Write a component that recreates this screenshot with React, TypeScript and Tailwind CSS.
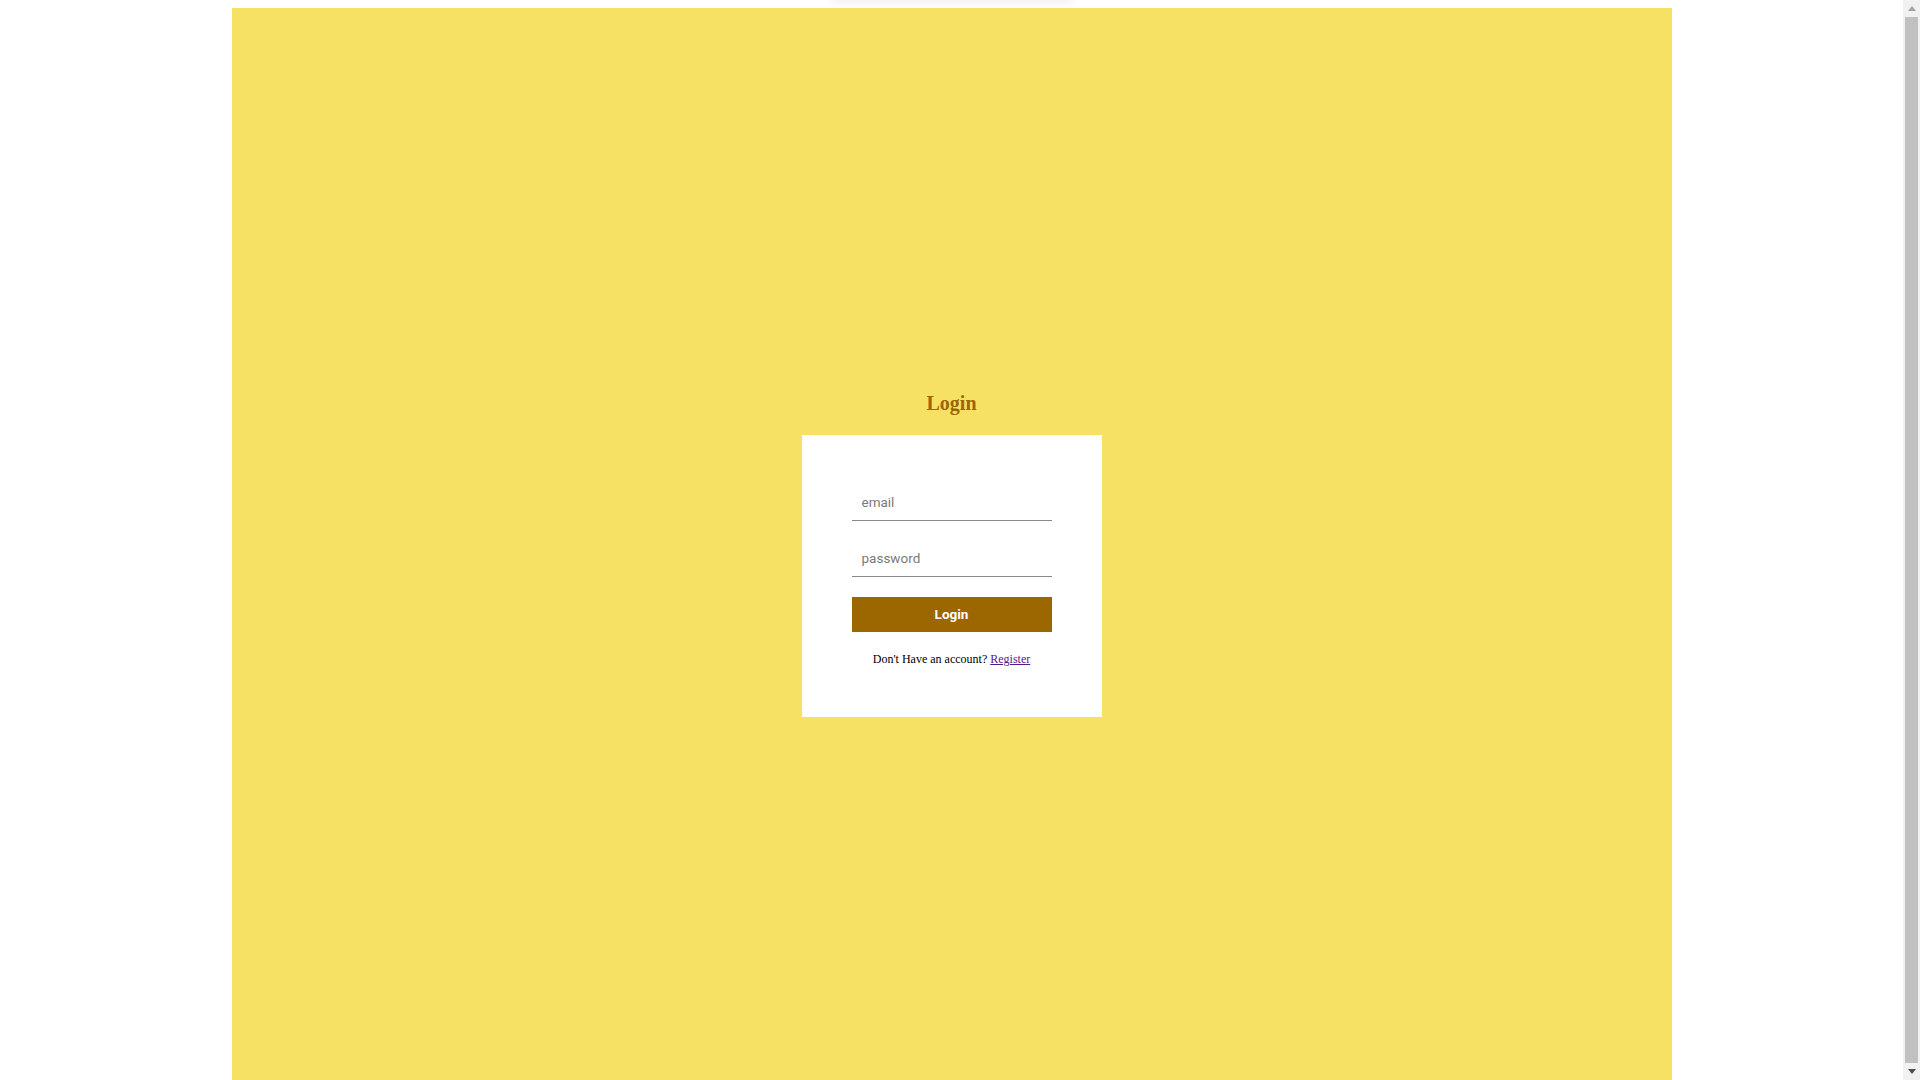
import { useState } from 'react';

function FakeScrollbar() {
  return (
    <aside className="w-[17px] h-screen bg-[#f1f1f1] flex flex-col items-center shrink-0">
      <div className="h-[17px] w-full flex items-center justify-center">
        <svg width="8" height="5" viewBox="0 0 8 5"><path d="M0 5 L4 0 L8 5 Z" fill="#a3a3a3" /></svg>
      </div>
      <div className="flex-1 w-[13px] bg-[#c1c1c1]" />
      <div className="h-[17px] w-full flex items-center justify-center">
        <svg width="8" height="5" viewBox="0 0 8 5"><path d="M0 0 L8 0 L4 5 Z" fill="#505050" /></svg>
      </div>
    </aside>
  );
}

export default function App() {
  const [email, setEmail] = useState('');
  const [password, setPassword] = useState('');

  return (
    <div className="h-screen flex overflow-hidden bg-white font-['Liberation_Serif',serif]">
      <main className="flex-1 min-w-0">
        {/* faint shadow of the header sitting above the viewport */}
        <div className="h-[8px] flex justify-center overflow-hidden">
          <div className="w-[230px] h-px -translate-y-[4px] shadow-[0_0_10px_6px_rgba(0,0,0,0.06)]" />
        </div>

        <div className="w-[1440px] mx-auto bg-[#f7e164] h-[1100px] pt-[384px] flex flex-col items-center">
          <h3 className="text-[20px] leading-[23px] font-bold text-[#9c6607]">Login</h3>

          <form
            onSubmit={e => e.preventDefault()}
            className="mt-[20px] w-[300px] h-[282px] bg-white px-[50px] pt-[54px] flex flex-col"
          >
            <input
              type="email"
              value={email}
              onChange={e => setEmail(e.target.value)}
              placeholder="email"
              className="h-[32px] w-full px-[10px] pb-[6px] border-b border-[#8a8a8a] text-[13.5px] font-['Roboto',sans-serif] text-gray-800 placeholder:text-[#7a7a7a] focus:outline-none"
            />
            <input
              type="password"
              value={password}
              onChange={e => setPassword(e.target.value)}
              placeholder="password"
              className="mt-[24px] h-[32px] w-full px-[10px] pb-[6px] border-b border-[#8a8a8a] text-[13.5px] font-['Roboto',sans-serif] text-gray-800 placeholder:text-[#7a7a7a] focus:outline-none"
            />
            <button
              type="submit"
              className="mt-[20px] h-[35px] w-full bg-[#9c6600] text-white text-[13.5px] font-bold font-['Roboto',sans-serif]"
            >
              Login
            </button>
            <p className="mt-[20px] text-center text-[12px] leading-[14px] text-black">
              Don't Have an account?{' '}
              <a href="#" className="text-[#551a8b] underline">Register</a>
            </p>
          </form>
        </div>
      </main>
      <FakeScrollbar />
    </div>
  );
}
